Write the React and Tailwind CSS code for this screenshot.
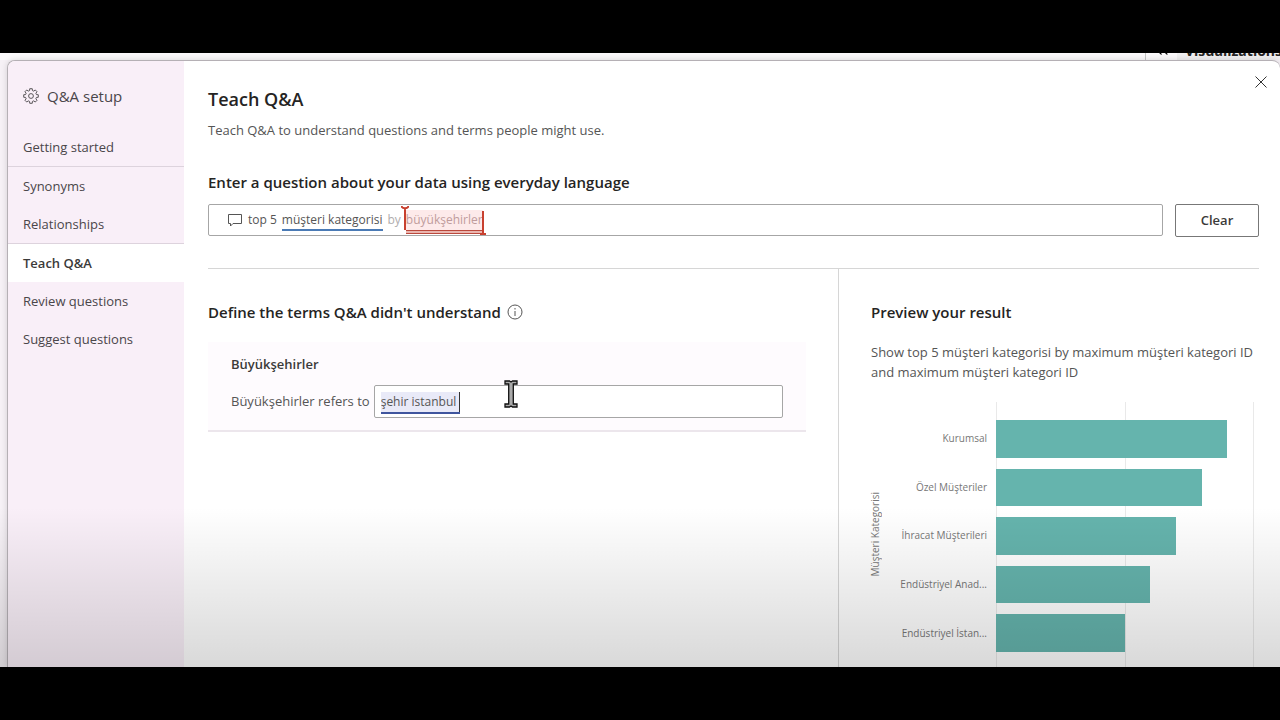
import { useState } from "react";
import { ChevronsLeft } from "lucide-react";

const navItems = [
  { label: "Getting started", divider: true },
  { label: "Synonyms" },
  { label: "Relationships", divider: true },
  { label: "Teach Q&A" },
  { label: "Review questions" },
  { label: "Suggest questions" },
];

const categories = [
  { name: "Kurumsal", value: 9 },
  { name: "Özel Müşteriler", value: 8 },
  { name: "İhracat Müşterileri", value: 7 },
  { name: "Endüstriyel Anad...", value: 6 },
  { name: "Endüstriyel İstan...", value: 5 },
];

const maxValue = 10;

function GearIcon() {
  const teeth = [];
  // 8 teeth, four corner points for each one
  for (let i = 0; i < 8; i++) {
    [
      [-15, 5.6],
      [-10, 7.4],
      [10, 7.4],
      [15, 5.6],
    ].forEach(([offset, r]) => {
      const a = ((i * 45 + offset) * Math.PI) / 180;
      teeth.push(
        `${(8 + r * Math.cos(a)).toFixed(2)},${(8 + r * Math.sin(a)).toFixed(2)}`
      );
    });
  }
  return (
    <svg
      viewBox="0 0 16 16"
      className="size-4 shrink-0"
      fill="none"
      stroke="currentColor"
      strokeWidth="0.9"
      strokeLinejoin="round"
    >
      <polygon points={teeth.join(" ")} />
      <circle cx="8" cy="8" r="2.4" />
    </svg>
  );
}

function Sidebar({ active, onSelect }) {
  return (
    <aside className="w-44 shrink-0 bg-[#f9eff8]">
      <div className="flex items-center gap-2 px-[15px] pt-[23px] pb-5 text-[15px] leading-6 text-[#4a464a]">
        <GearIcon />
        <h2>Q&A setup</h2>
      </div>
      <nav className="flex flex-col">
        {navItems.map((item) => (
          <button
            key={item.label}
            type="button"
            onClick={() => onSelect(item.label)}
            className={`px-[15px] pt-[2px] text-left text-[13px] ${
              item.divider ? "h-[39px] border-b border-[#ddd3dd]" : "h-[38px]"
            } ${
              active === item.label
                ? "bg-white font-semibold text-[#3b3a39]"
                : "text-[#4a464a]"
            }`}
          >
            {item.label}
          </button>
        ))}
      </nav>
    </aside>
  );
}

function QuestionBox({ value, onChange }) {
  return (
    <div className="relative flex h-8 flex-1 items-center rounded-[2px] border border-[#a6a6a6] bg-white pl-[19px] text-xs">
      <svg
        viewBox="0 0 14 13"
        className="h-[13px] w-[14px] shrink-0"
        fill="none"
        stroke="#555"
      >
        <path d="M.5.5h13v9H5L2.5 12V9.5h-2z" />
      </svg>
      <div className="relative ml-[6px] h-full flex-1">
        {/* Coloured words, drawn under the transparent input text */}
        <div
          aria-hidden="true"
          className="absolute inset-0 flex items-center gap-[5px] whitespace-pre text-[#555]"
        >
          <span>top 5</span>
          <span className="relative flex h-[18px] items-center">
            müşteri kategorisi
            <span className="absolute inset-x-0 top-full h-[2px] bg-[#4a7ab5]" />
          </span>
          <span className="text-[#b0adad]">by</span>
          <span className="relative flex h-5 items-center bg-[#fdeaea] text-[#bf9c9c]">
            büyükşehirler
            <span className="absolute inset-x-0 top-full h-1 border-y border-[#b9483c] bg-[#eab5ae]" />
            <svg
              viewBox="0 0 8 24"
              className="absolute -top-1 -left-[5px] h-6 w-2"
              fill="none"
              stroke="#c8402f"
              strokeWidth="2"
            >
              <path d="M.5 0C1 3 7 3 7.500 0M4 2v22" />
            </svg>
            <svg
              viewBox="0 0 8 24"
              className="absolute -right-1 -bottom-[5px] h-6 w-2"
              fill="none"
              stroke="#c8402f"
              strokeWidth="2"
            >
              <path d="M4 0v23M1 23h6" />
            </svg>
          </span>
        </div>
        <input
          id="question"
          type="text"
          spellCheck={false}
          value={value}
          onChange={(e) => onChange(e.target.value)}
          className="relative h-full w-full bg-transparent text-transparent outline-none"
        />
      </div>
    </div>
  );
}

function TermCard() {
  const [term, setTerm] = useState("şehir istanbul");

  return (
    <div className="mt-5 mr-8 border-b-2 border-[#ece6ec] bg-[#fefbfe] px-[23px] pt-3 pb-3 text-[13px]">
      <h4 className="leading-5 font-semibold text-[#3b3a39]">Büyükşehirler</h4>
      <div className="mt-[11px] flex items-center gap-1">
        <label htmlFor="term" className="text-[#555]">
          Büyükşehirler refers to
        </label>
        <div className="relative flex h-[33px] flex-1 items-center rounded-[2px] border border-[#a6a6a6] bg-white px-[6px] text-xs">
          <span
            aria-hidden="true"
            className="absolute flex h-5 items-center bg-[#e9eaf8] pr-1 text-transparent"
          >
            {term}
            <span className="absolute inset-x-0 top-full h-[2px] bg-[#3f559e]" />
            <span className="absolute inset-y-0 right-0 w-px bg-[#333]" />
          </span>
          <input
            id="term"
            type="text"
            spellCheck={false}
            value={term}
            onChange={(e) => setTerm(e.target.value)}
            className="relative h-full w-full bg-transparent text-[#555] outline-none"
          />
          {/* Mouse pointer */}
          <svg
            viewBox="0 0 14 28"
            className="pointer-events-none absolute -top-[6px] left-[129px] h-7 w-[14px]"
            fill="#aaa"
            stroke="#111"
            strokeWidth="1.300"
          >
            <path d="M1 1h4.500l1.500 1 1.500-1H13v3H9.300v20H13v3H8.500l-1.500-1-1.500 1H1v-3h3.700V4H1z" />
          </svg>
        </div>
      </div>
    </div>
  );
}

function ResultChart() {
  return (
    <figure className="mt-5 mr-[5px] flex flex-1 text-[10px] text-[#777]">
      <figcaption className="rotate-180 self-center leading-[8px] [writing-mode:vertical-rl]">
        Müşteri Kategorisi
      </figcaption>
      <div className="grid flex-1 grid-rows-5 gap-[11px] pt-[18px] pr-[9px] pb-[15px] text-right">
        {categories.map((c) => (
          <span key={c.name} className="flex items-center justify-end">
            {c.name}
          </span>
        ))}
      </div>
      <div className="relative w-[258px]">
        <div className="absolute inset-0 flex justify-between">
          <span className="w-px bg-[#e9e9e9]" />
          <span className="w-px bg-[#e9e9e9]" />
          <span className="w-px bg-[#e9e9e9]" />
        </div>
        <div className="relative grid h-full grid-rows-5 gap-[11px] pt-[18px] pr-px pb-[15px]">
          {categories.map((c) => (
            <div
              key={c.name}
              className="bg-[#65b4ad]"
              style={{ width: `${(c.value / maxValue) * 100}%` }}
            />
          ))}
        </div>
      </div>
    </figure>
  );
}

export default function App() {
  const [active, setActive] = useState("Teach Q&A");
  const [question, setQuestion] = useState(
    "top 5 müşteri kategorisi by büyükşehirler"
  );

  return (
    <div className="flex min-h-screen flex-col bg-black py-[53px] font-['Open_Sans','Noto_Sans',sans-serif]">
      <div className="relative flex flex-1 flex-col overflow-hidden bg-[#f6f1f6]">
        {/* Report pane behind the dialog */}
        <div className="flex h-[7px] items-end justify-end overflow-hidden bg-[#fbf9fb]">
          <div className="flex h-5 w-8 items-center justify-center border-l border-[#c4c4c4]">
            <ChevronsLeft size={20} strokeWidth={1.5} />
          </div>
          <div className="h-5 w-[103px] bg-[#f0eff0] pl-2 text-sm leading-[22px] font-bold whitespace-nowrap text-[#252423]">
            Visualizations
          </div>
        </div>

        <div
          role="dialog"
          aria-label="Q&A setup"
          className="relative ml-[7px] flex flex-1 overflow-hidden rounded-t-lg border-t border-l border-[#b5b0b5] bg-white shadow-[0_0_6px_rgba(0,0,0,0.15)]"
        >
          <Sidebar active={active} onSelect={setActive} />

          <main className="flex min-w-0 flex-1 flex-col pr-[21px] pl-6">
            <div className="flex items-start justify-between">
              <div>
                <h1 className="mt-6 text-lg leading-7 font-semibold text-[#252423]">
                  Teach Q&A
                </h1>
                <p className="mt-[7px] text-[13px] leading-5 text-[#555]">
                  Teach Q&A to understand questions and terms people might use.
                </p>
              </div>
              <button
                type="button"
                aria-label="Close"
                className="-mr-3 mt-[11px] flex size-5 items-center justify-center"
              >
                <svg viewBox="0 0 12 12" className="size-3" stroke="#333">
                  <path d="M.5.5l11 11M11.500.5l-11 11" />
                </svg>
              </button>
            </div>

            <label
              htmlFor="question"
              className="mt-8 text-[15px] leading-5 font-semibold text-[#252423]"
            >
              Enter a question about your data using everyday language
            </label>
            <div className="mt-3 flex items-start gap-3">
              <QuestionBox value={question} onChange={setQuestion} />
              <button
                type="button"
                onClick={() => setQuestion("")}
                className="h-[33px] w-[84px] rounded-[2px] border border-[#777] bg-white text-[13px] font-semibold text-[#3b3a39]"
              >
                Clear
              </button>
            </div>

            <div className="mt-[31px] flex flex-1 border-t border-[#d6d6d6]">
              <section className="flex-1 pt-[33px]">
                <h3 className="flex items-center gap-[6px] text-[15px] leading-5 font-semibold text-[#252423]">
                  Define the terms Q&A didn't understand
                  <svg
                    viewBox="0 0 16 16"
                    className="size-4"
                    fill="none"
                    stroke="#555"
                  >
                    <circle cx="8" cy="8" r="7" />
                    <path d="M8 7v5M8 4v1.500" />
                  </svg>
                </h3>
                <TermCard />
              </section>

              <section className="flex w-[421px] flex-col border-l border-[#d6d6d6] pt-[33px] pl-8">
                <h3 className="text-[15px] leading-5 font-semibold text-[#252423]">
                  Preview your result
                </h3>
                <p className="mt-5 text-[13px] leading-5 text-[#555]">
                  Show top 5 müşteri kategorisi by maximum müşteri kategori ID
                  and maximum müşteri kategori ID
                </p>
                <ResultChart />
              </section>
            </div>
          </main>
        </div>

        {/* Shade that darkens the bottom of the frame */}
        <div className="pointer-events-none absolute inset-x-0 bottom-0 h-40 bg-linear-to-b from-transparent to-black/15" />
      </div>
    </div>
  );
}
